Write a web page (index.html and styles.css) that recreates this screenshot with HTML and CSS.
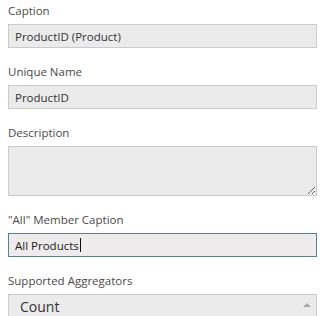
FILE: index.html
```html
<!doctype html>
<html>

<head>
  <title>Dimension attribute properties</title>
  <link rel="stylesheet" href="styles.css">
</head>

<body>
  <div class="props-panel">
    <div class="prop-group">
      <label class="prop-label" for="caption">Caption</label>
      <input type="text" id="caption" class="prop-input" value="ProductID (Product)" readonly>
    </div>
    <div class="prop-group">
      <label class="prop-label" for="unique-name">Unique Name</label>
      <input type="text" id="unique-name" class="prop-input" value="ProductID" readonly>
    </div>
    <div class="prop-group">
      <label class="prop-label" for="description">Description</label>
      <textarea id="description" class="prop-textarea"></textarea>
    </div>
    <div class="prop-group">
      <label class="prop-label">"All" Member Caption</label>
      <!-- focused field, caret drawn by hand so it shows in the screenshot -->
      <div class="prop-input is-focused" role="textbox">All Products<span class="caret"></span></div>
    </div>
    <div class="prop-group">
      <label class="prop-label">Supported Aggregators</label>
      <div class="prop-list">
        <div class="list-item">Count</div>
        <div class="list-scroll"><span class="scroll-up"></span></div>
      </div>
    </div>
  </div>
</body>

</html>
```

FILE: styles.css
```css
body {
  margin: 0;
  background-color: #fff;
  font-family: 'Segoe UI', 'Open Sans', sans-serif;
}

.props-panel {
  padding: 3px 3px 0 8px;
}

.prop-group {
  margin-bottom: 16px;
}

.prop-label {
  display: block;
  font-size: 11.5px;
  line-height: 16px;
  margin-bottom: 5px;
  color: #4a4a4a;
}

.prop-input {
  display: block;
  box-sizing: border-box;
  width: 100%;
  height: 24px;
  margin: 0;
  padding: 0 6px;
  border: 1px solid #cacaca;
  background-color: #ebebeb;
  font-family: inherit;
  font-size: 11.5px;
  color: #333;
  outline: none;
}

.prop-input.is-focused {
  display: flex;
  align-items: center;
  border-color: #557f93;
  background-color: #edebeb;
  color: #222;
}

.caret {
  display: inline-block;
  width: 1px;
  height: 14px;
  margin-left: 1px;
  background-color: #111;
}

.prop-textarea {
  display: block;
  box-sizing: border-box;
  width: 100%;
  height: 50px;
  margin: 0 0 6px 0;
  padding: 4px 6px;
  border: 1px solid #cacaca;
  background-color: #ebebeb;
  font-family: inherit;
  font-size: 11.5px;
  resize: vertical;
  outline: none;
}

.prop-list {
  display: flex;
  height: 40px;
  border: 1px solid #cacaca;
  border-bottom: none;
  background-color: #ebebeb;
}

.list-item {
  flex: 1;
  padding: 3px 11px;
  font-size: 14px;
  line-height: 18px;
  color: #333;
}

.list-scroll {
  width: 18px;
  display: flex;
  justify-content: center;
  padding-top: 8px;
}

.scroll-up {
  width: 0;
  height: 0;
  border-left: 4px solid transparent;
  border-right: 4px solid transparent;
  border-bottom: 4px solid #a8a8a8;
}
```
